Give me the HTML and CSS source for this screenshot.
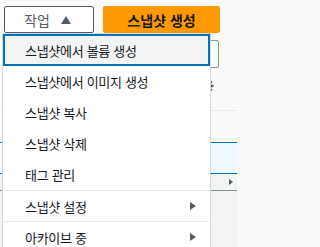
FILE: index.html
```html
<!DOCTYPE html>
<html lang="ko">
<head>
<meta charset="utf-8">
<title>스냅샷</title>
<link rel="stylesheet" href="styles.css">
</head>
<body>
<div class="page">
  <div class="toolbar">
    <div class="btn btn-normal">작업
      <svg class="up" width="10" height="8" viewBox="0 0 10 8"><polygon points="5,0 10,8 0,8" fill="#545b64"/></svg>
    </div>
    <div class="btn btn-primary">스냅샷 생성</div>
  </div>
  <div class="tools-row"><div class="icon-btn"></div></div>
  <div class="gear-row">
    <svg class="gear" width="14" height="14" viewBox="0 0 16 16">
      <circle cx="8" cy="8" r="4.3" fill="none" stroke="#545b64" stroke-width="2"/>
      <g stroke="#545b64" stroke-width="2.6">
        <line x1="8" y1="0.5" x2="8" y2="3.5"/>
        <line x1="8" y1="12.5" x2="8" y2="15.5"/>
        <line x1="0.5" y1="8" x2="3.5" y2="8"/>
        <line x1="12.5" y1="8" x2="15.5" y2="8"/>
        <line x1="2.7" y1="2.7" x2="4.8" y2="4.8"/>
        <line x1="11.2" y1="11.2" x2="13.3" y2="13.3"/>
        <line x1="13.3" y1="2.7" x2="11.2" y2="4.8"/>
        <line x1="2.7" y1="13.3" x2="4.8" y2="11.2"/>
      </g>
    </svg>
  </div>
  <div class="table">
    <div class="row"></div>
    <div class="row selected"></div>
    <div class="row detail">
      <svg width="4" height="6" viewBox="0 0 4 6"><polygon points="0,0 4,3 0,6" fill="#545b64"/></svg>
    </div>
    <div class="rest"></div>
  </div>

  <div class="menu">
    <div class="item active">스냅샷에서 볼륨 생성</div>
    <div class="item">스냅샷에서 이미지 생성</div>
    <div class="item">스냅샷 복사</div>
    <div class="item">스냅샷 삭제</div>
    <div class="item">태그 관리</div>
    <div class="section">
      <div class="item">스냅샷 설정
        <svg width="6" height="8" viewBox="0 0 6 8"><polygon points="0,0 6,4 0,8" fill="#545b64"/></svg>
      </div>
    </div>
    <div class="section">
      <div class="item">아카이브 중
        <svg width="6" height="8" viewBox="0 0 6 8"><polygon points="0,0 6,4 0,8" fill="#545b64"/></svg>
      </div>
    </div>
  </div>
</div>
</body>
</html>
```

FILE: styles.css
```css
* { box-sizing: border-box; }
html, body { margin: 0; padding: 0; }
body {
  font-family: "Noto Sans CJK KR", "Noto Sans", sans-serif;
  background: #fafafa;
  color: #16191f;
}
.page {
  position: relative;
  width: 237px;
  height: 247px;
  overflow: hidden;
}
.toolbar {
  display: flex;
  gap: 9px;
  padding: 6px 0 0 4px;
}
.btn {
  height: 27px;
  border-radius: 2px;
  display: flex;
  align-items: center;
  font-size: 14px;
  line-height: 1;
}
.btn-normal {
  width: 90px;
  border: 1px solid #545b64;
  background: #fff;
  color: #545b64;
  padding-left: 19px;
  gap: 11px;
}
.btn-primary {
  width: 117px;
  background: #ff9900;
  color: #16191f;
  font-weight: 700;
  justify-content: center;
}
.tools-row {
  display: flex;
  justify-content: flex-end;
  padding-right: 18px;
  margin-top: 7px;
}
.icon-btn {
  width: 30px;
  height: 28px;
  border: 1px solid #879596;
  border-radius: 2px;
  background: #fff;
}
.gear-row {
  display: flex;
  justify-content: flex-end;
  padding-right: 23px;
  margin-top: 11px;
  height: 14px;
}
.gear { display: block; }
.table {
  margin-top: 17px;
  border-top: 1px solid #eaeded;
}
.row { height: 31px; }
.row.selected {
  height: 32px;
  border-top: 1px solid #0073bb;
  border-bottom: 1px solid #0073bb;
  background: #f1faff;
}
.row.detail {
  height: 17px;
  background: #f2f3f3;
  border-bottom: 1px solid #879596;
  display: flex;
  justify-content: flex-end;
  align-items: center;
  padding-right: 4px;
}
.rest {
  height: 60px;
  background: #f2f3f3;
}
.menu {
  position: absolute;
  left: 2px;
  top: 33px;
  width: 209px;
  background: #fff;
  border: 1px solid #d5dbdb;
  border-bottom: 0;
  font-size: 13px;
  letter-spacing: -0.3px;
}
.item {
  display: flex;
  align-items: center;
  justify-content: space-between;
  height: 31px;
  padding: 0 12px 0 20px;
  border: 2px solid transparent;
  color: #16191f;
}
.item.active {
  height: 32px;
  border-color: #0073bb;
  background: #f2f3f3;
}
.section { border-top: 1px solid #eaeded; }
.section .item { height: 30px; }
```
